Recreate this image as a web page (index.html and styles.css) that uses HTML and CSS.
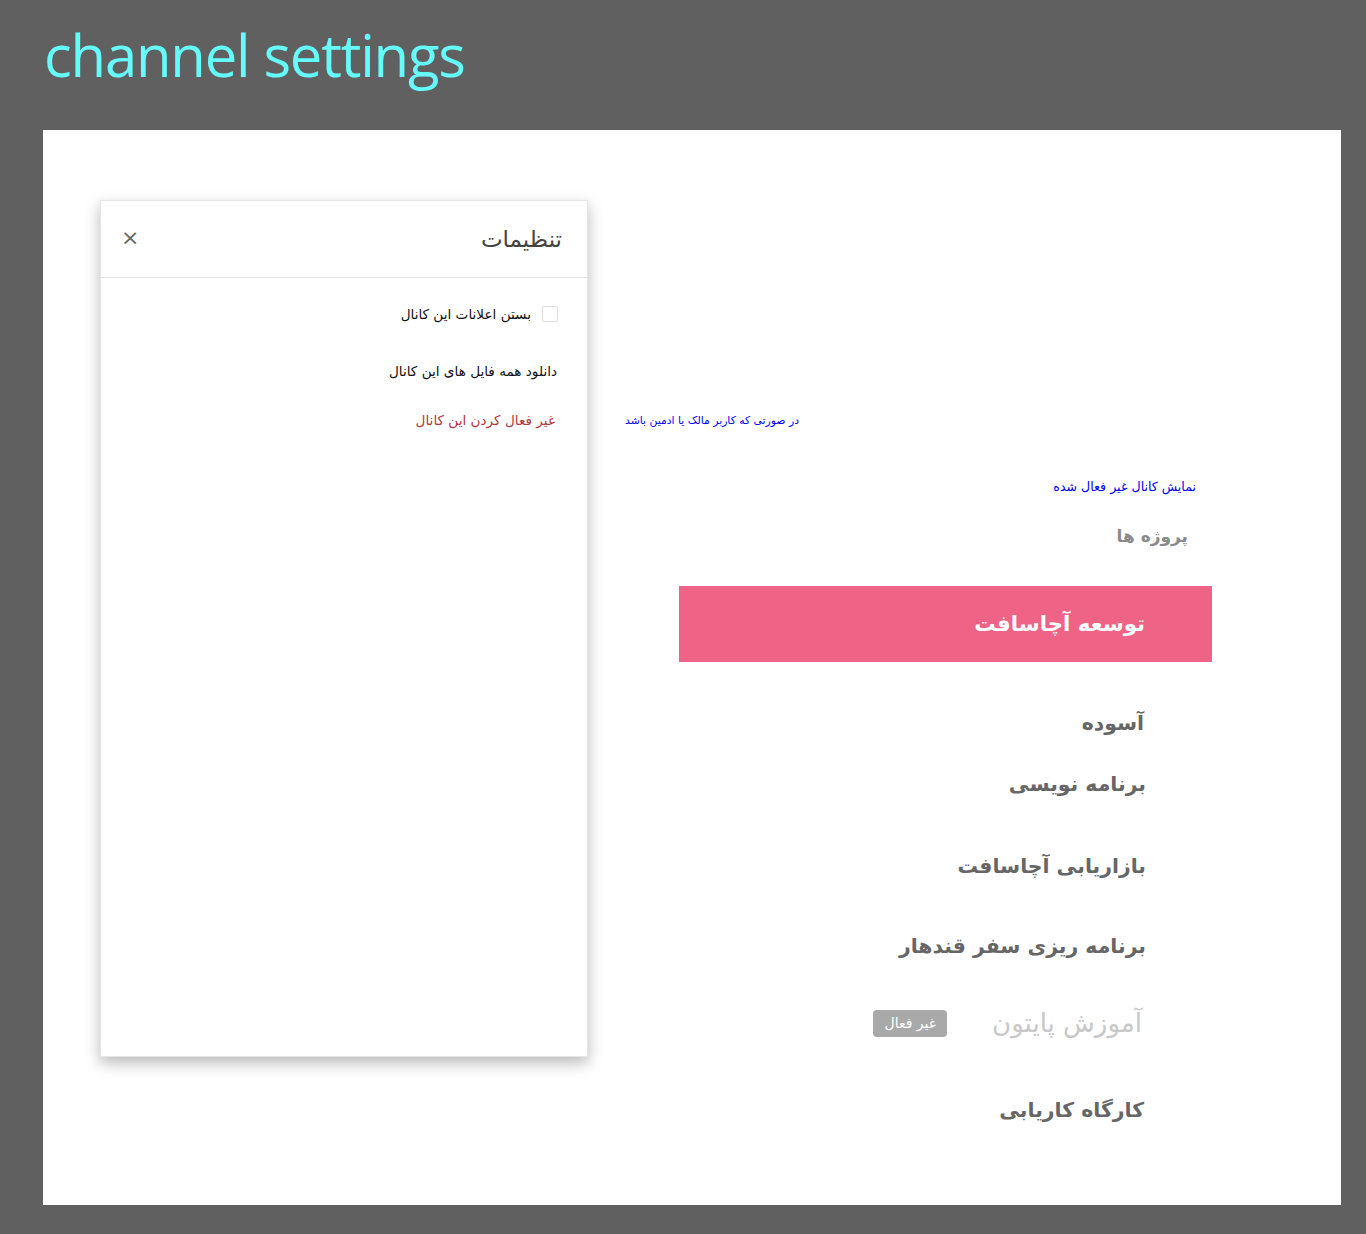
FILE: index.html
```html
<!DOCTYPE html>
<html lang="fa">
<head>
<meta charset="utf-8">
<link rel="stylesheet" href="styles.css">
</head>
<body>
<header class="top"><h1 class="title">channel settings</h1></header>
<main class="panel">
  <section class="dialog" dir="rtl">
    <div class="dlg-head">
      <span class="dlg-title">تنظیمات</span>
      <span class="dlg-close">×</span>
    </div>
    <div class="dlg-body">
      <label class="row row-check"><span class="box"></span><span>بستن اعلانات این کانال</span></label>
      <div class="row row-dl">دانلود همه فایل های این کانال</div>
      <div class="row row-off">غیر فعال کردن این کانال</div>
    </div>
  </section>
  <section class="side" dir="rtl">
    <div class="note note1">در صورتی که کاربر مالک یا ادمین باشد</div>
    <div class="note note2">نمایش کانال غیر فعال شده</div>
    <div class="projects">پروژه ها</div>
    <div class="bar">توسعه آچاسافت</div>
    <div class="item i1">آسوده</div>
    <div class="item i2">برنامه نویسی</div>
    <div class="item i3">بازاریابی آچاسافت</div>
    <div class="item i4">برنامه ریزی سفر قندهار</div>
    <div class="item i5 disabled"><span>آموزش پایتون</span><span class="badge">غیر فعال</span></div>
    <div class="item i6">کارگاه کاریابی</div>
  </section>
</main>
</body>
</html>
```

FILE: styles.css
```css
html, body {
  margin: 0;
  padding: 0;
  background: #606060;
}
body {
  font-family: "DejaVu Sans", sans-serif;
  width: 1366px;
  height: 1234px;
}
.top {
  height: 130px;
  box-sizing: border-box;
  padding: 20px 0 0 44px;
}
.title {
  margin: 0;
  font-family: "Open Sans", sans-serif;
  font-weight: 400;
  font-size: 58px;
  line-height: 70px;
  letter-spacing: -1.2px;
  color: #66fbfb;
}
.panel {
  margin-left: 43px;
  width: 1298px;
  height: 1075px;
  background: #fff;
  display: flex;
  align-items: flex-start;
  box-sizing: border-box;
  padding-left: 57px;
}
.dialog {
  margin-top: 70px;
  width: 488px;
  height: 857px;
  box-sizing: border-box;
  border: 1px solid #e6e6e6;
  background: #fff;
  box-shadow: 0 6px 14px rgba(0,0,0,0.28);
}
.dlg-head {
  height: 76px;
  border-bottom: 1px solid #e3e3e3;
  display: flex;
  align-items: center;
  justify-content: space-between;
  padding: 0 25px 0 20px;
}
.dlg-title {
  font-size: 23px;
  color: #444;
}
.dlg-close {
  font-family: "DejaVu Sans", sans-serif;
  font-size: 22px;
  color: #666;
  line-height: 1;
  margin-top: -3px;
}
.dlg-body {
  padding-top: 26px;
}
.row {
  font-size: 13.6px;
  line-height: 20px;
  color: #111;
  white-space: nowrap;
}
.row-check {
  display: flex;
  align-items: center;
  gap: 11px;
  padding-right: 29px;
}
.box {
  width: 14px;
  height: 14px;
  border: 1px solid #ddd;
  border-radius: 2px;
}
.row-dl {
  margin-top: 37px;
  padding-right: 30px;
}
.row-off {
  margin-top: 29px;
  padding-right: 32px;
  color: #b0383c;
}
.side {
  margin-left: 24px;
  width: 600px;
  padding-top: 281px;
  display: flex;
  flex-direction: column;
  align-items: flex-start;
}
.note {
  font-size: 12.6px;
  line-height: 20px;
  color: #0000ee;
  white-space: nowrap;
}
.note1 {
  margin-right: 413px;
  font-size: 10.8px;
}
.note2 {
  margin-top: 46px;
  margin-right: 16px;
}
.projects {
  margin-top: 24px;
  margin-right: 24px;
  font-size: 17px;
  line-height: 30px;
  font-weight: bold;
  color: #8a8a8a;
}
.bar {
  margin-top: 35px;
  width: 533px;
  height: 76px;
  box-sizing: border-box;
  background: #ef6486;
  color: #fff;
  font-size: 21.3px;
  font-weight: bold;
  line-height: 76px;
  padding-right: 67px;
  white-space: nowrap;
}
.item {
  margin-right: 66px;
  font-size: 20.4px;
  font-weight: bold;
  line-height: 36px;
  color: #666;
  white-space: nowrap;
}
.i1 { margin-top: 43px; margin-right: 68px; }
.i2 { margin-top: 25px; }
.i3 { margin-top: 46px; }
.i4 { margin-top: 44px; }
.i5 {
  margin-top: 41px;
  margin-right: 70px;
  display: flex;
  align-items: center;
  gap: 45px;
  color: #c8c8c8;
  font-weight: normal;
  font-size: 26px;
}
.i6 { margin-top: 51px; margin-right: 68px; }
.badge {
  background: #a9a9a9;
  color: #fff;
  font-size: 14px;
  font-weight: normal;
  line-height: 27px;
  height: 27px;
  padding: 0 11px;
  border-radius: 4px;
}
```
